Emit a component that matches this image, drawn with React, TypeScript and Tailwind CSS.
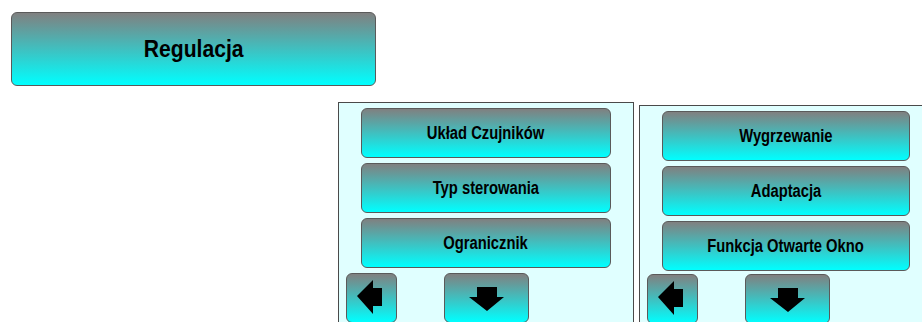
const btn =
  "flex items-center justify-center rounded-[6px] border border-[#5a5a5a] bg-[linear-gradient(180deg,#808080,#00ffff)] font-bold text-black";

function LeftArrow() {
  return (
    <svg width="26" height="36" viewBox="0 0 26 36" className="block">
      <polygon points="0,16 16,0 16,8 25,8 25,26 16,26 16,34" fill="#000" />
    </svg>
  );
}

function DownArrow() {
  return (
    <svg width="36" height="26" viewBox="0 0 36 26" className="block">
      <polygon points="8,0 28,0 28,10 35,10 18,24 0,10 8,10" fill="#000" />
    </svg>
  );
}

function Panel({ items, wide, offset }: { items: string[]; wide: number; offset: boolean }) {
  return (
    <div
      className={
        "h-[240px] shrink-0 border border-[#4a4a4a] bg-[#e0ffff] " +
        (offset ? "mt-[3px] w-[300px]" : "w-[296px]")
      }
    >
      <div className="flex flex-col gap-[5px] pl-[22px] pt-[5px]">
        {items.map((label) => (
          <div key={label} className={btn + " h-[50px] text-[18px]"} style={{ width: wide }}>
            <span className="inline-block scale-x-[0.82] whitespace-nowrap">{label}</span>
          </div>
        ))}
      </div>
      <div className={"flex gap-[47px] pl-[7px] " + (offset ? "mt-[3px]" : "mt-[5px]")}>
        <div className={btn + " h-[50px] w-[51px] justify-start pl-[10px]"}>
          <LeftArrow />
        </div>
        <div className={btn + " h-[50px] w-[85px] pt-[4px]"}>
          <DownArrow />
        </div>
      </div>
    </div>
  );
}

export default function App() {
  return (
    <div className="h-[322px] w-[922px] overflow-hidden bg-white font-['Liberation_Sans',Arial,sans-serif]">
      <div className="pl-[11px] pt-[12px]">
        <div className={btn + " h-[74px] w-[365px] text-[24px]"}>
          <span className="inline-block scale-x-[0.88] whitespace-nowrap">Regulacja</span>
        </div>
      </div>
      <div className="mt-[16px] flex gap-[5px] pl-[338px]">
        <Panel items={["Układ Czujników", "Typ sterowania", "Ogranicznik"]} wide={250} offset={false} />
        <Panel items={["Wygrzewanie", "Adaptacja", "Funkcja Otwarte Okno"]} wide={248} offset={true} />
      </div>
    </div>
  );
}
